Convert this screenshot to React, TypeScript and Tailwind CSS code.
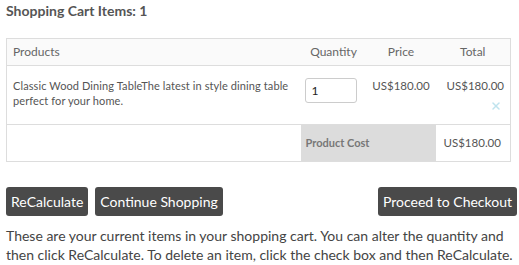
import { X } from 'lucide-react';

const font = { fontFamily: 'Lato, "Open Sans", "Liberation Sans", sans-serif' };

export default function App() {
  return (
    <div className="w-[519px] h-[265px] bg-white px-[6px] pt-[2px] text-[#444] overflow-hidden" style={font}>
      <h1 className="text-[14px] font-bold text-[#555] leading-[18px]">Shopping Cart Items: 1</h1>

      <table className="mt-[18px] w-[504px] border border-[#ddd] border-collapse text-[11px] text-[#555] table-fixed">
        <colgroup>
          <col className="w-[294px]" />
          <col className="w-[66px]" />
          <col className="w-[69px]" />
          <col className="w-[75px]" />
        </colgroup>
        <thead>
          <tr className="h-[27px] bg-[#fafafa] border-b border-[#ddd] text-[#666] text-[12px]">
            <th className="text-left font-normal pl-[6px]">Products</th>
            <th className="font-normal">Quantity</th>
            <th className="font-normal">Price</th>
            <th className="font-normal">Total</th>
          </tr>
        </thead>
        <tbody>
          <tr className="h-[59px] border-b border-[#ddd] align-top">
            <td className="pl-[6px] pr-[10px] pt-[12px] leading-[15px] tracking-[0.1px]">
              Classic Wood Dining TableThe latest in style dining table perfect for your home.
            </td>
            <td className="pt-[12px]">
              <input
                defaultValue="1"
                className="ml-[4px] w-[52px] h-[25px] border border-[#ccc] rounded-[3px] px-[6px] text-[12px] text-[#222] outline-none"
              />
            </td>
            <td className="pt-[11px] text-center text-[11.5px]">US$180.00</td>
            <td className="pt-[11px] pr-[6px] text-right relative text-[11.5px]">
              US$180.00
              <X className="absolute right-[8px] top-[34px] w-[12px] h-[12px] text-[#bfe3ee]" strokeWidth={3} />
            </td>
          </tr>
          <tr className="h-[37px]">
            <td></td>
            <td colSpan={2} className="bg-[#dcdcdc] pl-[5px] text-[#777] font-bold">Product Cost</td>
            <td className="pl-[8px] text-[11.5px]">US$180.00</td>
          </tr>
        </tbody>
      </table>

      <div className="mt-[25px] flex items-center">
        <button className="h-[29px] px-[5px] bg-[#4a4a4a] text-white text-[14px] rounded-[3px]">ReCalculate</button>
        <button className="ml-[7px] h-[29px] px-[5px] bg-[#4a4a4a] text-white text-[14px] rounded-[3px]">Continue Shopping</button>
        <button className="ml-auto mr-[-4px] h-[29px] px-[5px] bg-[#4a4a4a] text-white text-[14px] rounded-[3px]">Proceed to Checkout</button>
      </div>

      <p className="mt-[10px] text-[14px] leading-[19px] text-[#444] w-[510px]">
        These are your current items in your shopping cart. You can alter the quantity and then click ReCalculate. To delete an item, click the check box and then ReCalculate.
      </p>
    </div>
  );
}
